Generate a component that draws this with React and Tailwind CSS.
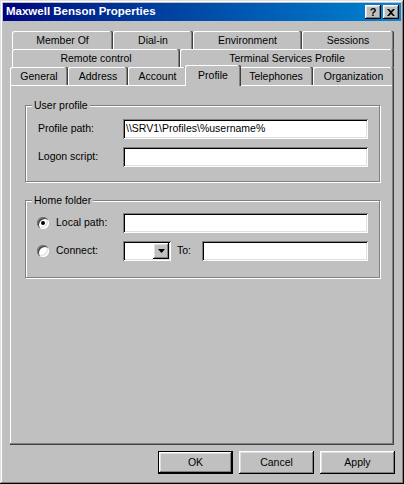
import React from "react";

// classic 3D edges
const raised =
  "shadow-[inset_-1px_-1px_#000,inset_1px_1px_#fff,inset_-2px_-2px_#808080,inset_2px_2px_#dfdfdf]";
const sunken =
  "shadow-[inset_1px_1px_#808080,inset_-1px_-1px_#fff,inset_2px_2px_#000,inset_-2px_-2px_#dfdfdf]";
const tabEdge = "shadow-[inset_-1px_0_#404040,inset_-2px_0_#808080,inset_1px_1px_#fff]";

const row1 = [
  { label: "Member Of", w: "w-[101px]" },
  { label: "Dial-in", w: "w-[80px]" },
  { label: "Environment", w: "w-[109px]" },
  { label: "Sessions", w: "w-[92px]" },
];
const row2 = [
  { label: "Remote control", w: "w-[168px]" },
  { label: "Terminal Services Profile", w: "w-[214px]" },
];
const row3 = [
  { label: "General", w: "w-[58px]" },
  { label: "Address", w: "w-[60px]" },
  { label: "Account", w: "w-[59px]" },
  { label: "Profile", w: "w-[56px]", selected: true },
  { label: "Telephones", w: "w-[74px]" },
  { label: "Organization", w: "w-[81px]" },
];

function Tab({ label, w, selected }) {
  if (selected) {
    return (
      <div
        className={`${w} h-[21px] -mx-[2px] -mb-[1px] relative z-10 bg-[#c0c0c0] rounded-t-[2px] flex items-start justify-center pt-[3px] ${tabEdge}`}
      >
        {label}
      </div>
    );
  }
  return (
    <div
      className={`${w} h-[18px] bg-[#c0c0c0] rounded-t-[2px] flex items-center justify-center pt-[1px] ${tabEdge}`}
    >
      {label}
    </div>
  );
}

function GroupBox({ title, children, className = "" }) {
  return (
    <div
      className={`relative w-[355px] border border-[#808080] shadow-[1px_1px_#fff,inset_1px_1px_#fff] ${className}`}
    >
      <span className="absolute left-[6px] -top-[7px] bg-[#c0c0c0] px-[2px] leading-[13px]">
        {title}
      </span>
      {children}
    </div>
  );
}

function Field({ className = "", children }) {
  return (
    <div className={`h-[20px] bg-white flex items-center pl-[3px] ${sunken} ${className}`}>
      {children}
    </div>
  );
}

function Radio({ checked }) {
  return (
    <div className="w-[12px] h-[12px] rounded-full bg-white shadow-[inset_1px_1px_#808080,inset_2px_2px_#404040,inset_-1px_-1px_#fff,inset_-2px_-2px_#dfdfdf] flex items-center justify-center">
      {checked && <div className="w-[4px] h-[4px] rounded-full bg-black" />}
    </div>
  );
}

function Button({ label, isDefault }) {
  return (
    <div className={`w-[75px] h-[23px] ${isDefault ? "border border-black" : ""}`}>
      <div className={`w-full h-full bg-[#c0c0c0] flex items-center justify-center ${raised}`}>
        {label}
      </div>
    </div>
  );
}

export default function App() {
  return (
    <div className="w-[404px] h-[484px] bg-[#c0c0c0] p-[3px] shadow-[inset_-1px_-1px_#000,inset_1px_1px_#dfdfdf,inset_-2px_-2px_#808080,inset_2px_2px_#fff] flex flex-col font-['Liberation_Sans',Arial,sans-serif] text-[10.5px] text-black">
      {/* title bar */}
      <div className="h-[18px] bg-gradient-to-r from-[#000080] to-[#1084d0] flex items-center pl-[3px] pr-[2px]">
        <span className="text-white font-bold text-[11.5px] flex-1">Maxwell Benson Properties</span>
        <div className={`w-[16px] h-[14px] bg-[#c0c0c0] flex items-center justify-center font-bold text-[11px] leading-none ${raised}`}>
          ?
        </div>
        <div className={`w-[16px] h-[14px] ml-[2px] bg-[#c0c0c0] flex items-center justify-center ${raised}`}>
          <svg width="8" height="7" viewBox="0 0 8 7">
            <path d="M0 0h2l2 2 2-2h2L5 3.5 8 7H6L4 5 2 7H0l3-3.5z" fill="#000" />
          </svg>
        </div>
      </div>

      <div className="px-[7px] pt-[10px] flex flex-col">
        {/* tabs */}
        <div className="flex pl-[2px]">
          {row1.map((t) => (
            <Tab key={t.label} {...t} />
          ))}
        </div>
        <div className="flex pl-[2px]">
          {row2.map((t) => (
            <Tab key={t.label} {...t} />
          ))}
        </div>
        <div className="flex h-[18px] items-end">
          {row3.map((t) => (
            <Tab key={t.label} {...t} />
          ))}
        </div>

        {/* panel */}
        <div className="w-[384px] h-[360px] shadow-[inset_-1px_-1px_#404040,inset_-2px_-2px_#808080,inset_1px_1px_#fff] pl-[15px] pt-[20px] flex flex-col">
          <GroupBox title="User profile" className="h-[77px] pt-[13px] pl-[12px]">
            <div className="flex items-center">
              <span className="w-[85px]">Profile path:</span>
              <Field className="w-[245px]">{"\\\\SRV1\\Profiles\\%username%"}</Field>
            </div>
            <div className="flex items-center mt-[8px]">
              <span className="w-[85px]">Logon script:</span>
              <Field className="w-[245px]" />
            </div>
          </GroupBox>

          <GroupBox title="Home folder" className="h-[78px] mt-[18px] pt-[12px] pl-[11px]">
            <div className="flex items-center">
              <Radio checked />
              <span className="w-[67px] ml-[7px]">Local path:</span>
              <Field className="w-[245px]" />
            </div>
            <div className="flex items-center mt-[8px]">
              <Radio />
              <span className="w-[67px] ml-[7px]">Connect:</span>
              <div className={`w-[48px] h-[20px] bg-white flex items-center justify-end p-[2px] ${sunken}`}>
                <div className={`w-[16px] h-[16px] bg-[#c0c0c0] flex items-center justify-center ${raised}`}>
                  <svg width="7" height="4" viewBox="0 0 7 4">
                    <path d="M0 0h7L3.5 4z" fill="#000" />
                  </svg>
                </div>
              </div>
              <span className="w-[31px] pl-[6px]">To:</span>
              <Field className="w-[166px]" />
            </div>
          </GroupBox>
        </div>

        {/* buttons */}
        <div className="flex justify-end gap-[6px] mt-[6px] -mr-[1px]">
          <Button label="OK" isDefault />
          <Button label="Cancel" />
          <Button label="Apply" />
        </div>
      </div>
    </div>
  );
}
